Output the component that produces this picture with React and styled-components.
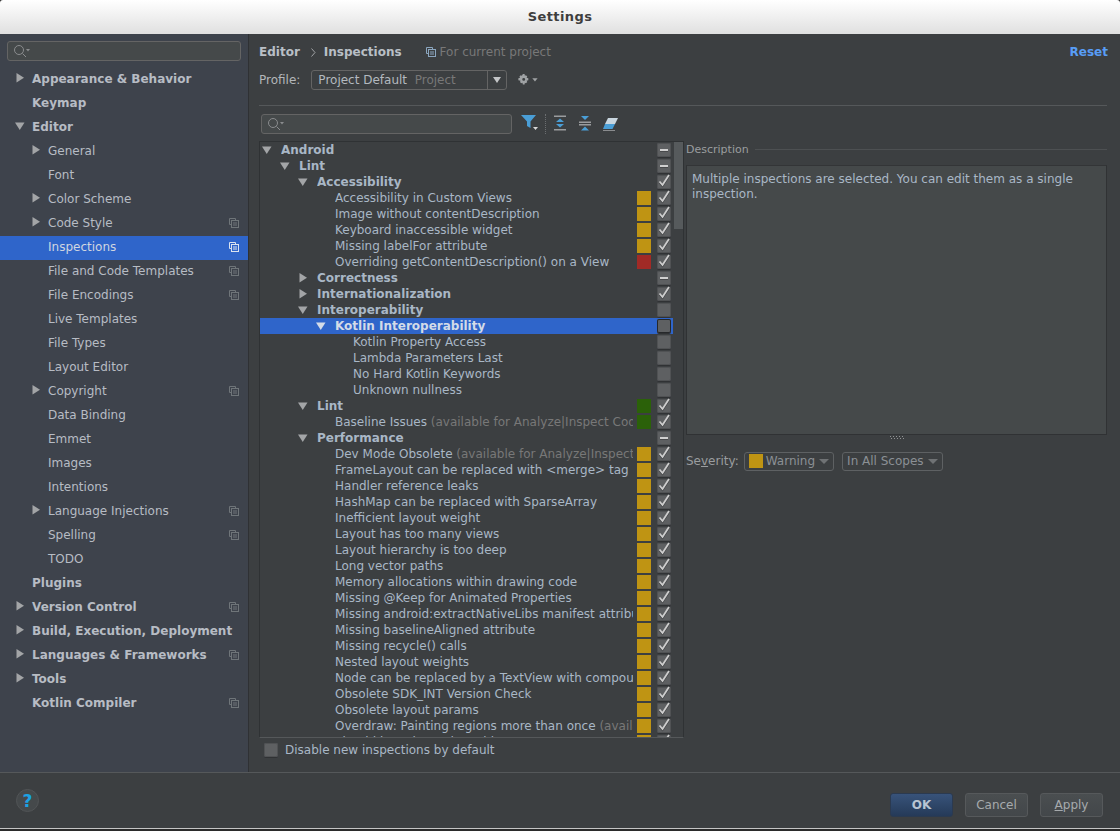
import React from 'react';
import styled, { createGlobalStyle } from 'styled-components';

const Global = createGlobalStyle`
  html, body { margin: 0; padding: 0; background: #2b2b2b; }
  body { font-family: "DejaVu Sans", sans-serif; font-size: 12px; color: #bbbbbb; }
  * { box-sizing: border-box; }
`;

const Window = styled.div`
  width: 1120px; height: 831px; display: flex; flex-direction: column; overflow: hidden;
  background: #2b2b2b; border-bottom: 2px solid #2b2b2b;
`;
const TitleBar = styled.div`
  height: 34px; flex: none; display: flex; align-items: center; justify-content: center; padding-bottom: 2px;
  background: linear-gradient(#ffffff, #e0e0e0); border-radius: 3px 3px 0 0;
  font-weight: 700; font-size: 13px; color: #3e3e3e; letter-spacing: .4px;
`;
const Main = styled.div`flex: 1; display: flex; min-height: 0; background: #3c3f41;`;
const Sidebar = styled.aside`
  width: 249px; flex: none; background: #3e434c; border-right: 1px solid #2f3134;
  padding-top: 7px; display: flex; flex-direction: column;
`;
const SearchBox = styled.div`
  height: 20px; display: flex; align-items: center; padding-left: 5px;
  background: #45494a; border: 1px solid #646464; border-radius: 3px;
`;
const SideSearch = styled(SearchBox)`margin: 0 7px 7px 7px; width: 234px; flex: none;`;
const SideRow = styled.div`
  height: 24px; flex: none; display: flex; align-items: center; position: relative;
  padding-left: ${p => p.$level ? 48 : 32}px; padding-bottom: 2px;
  font-size: 12px; font-weight: ${p => p.$level ? 400 : 700};
  color: ${p => p.$selected ? '#cfd6e0' : '#b7bcc4'};
  background: ${p => p.$selected ? '#2f65ca' : 'transparent'};
`;
const ArrowSlot = styled.span`
  position: absolute; top: 5px; left: ${p => p.$left}px; width: 10px; height: 10px; display: flex;
`;
const CopyMark = styled.span`position: absolute; right: 9px; top: 6px; display: flex;`;

const Content = styled.main`flex: 1; display: flex; flex-direction: column; padding: 0 13px 0 10px; min-width: 0;`;
const Breadcrumb = styled.div`height: 36px; flex: none; display: flex; align-items: center; font-size: 12px;`;
const Crumb = styled.span`font-weight: 700; color: #b9bfc6;`;
const Sep = styled.span`margin: 0 8px 0 11px; display: flex;`;
const ProjectNote = styled.span`display: flex; align-items: center; gap: 4px; margin-left: 24px; color: #787878; font-size: 12px;`;
const Reset = styled.a`margin-left: auto; margin-right: -1px; color: #589df6; font-weight: 700; font-size: 12px;`;
const ProfileRow = styled.div`
  height: 20px; flex: none; display: flex; align-items: center; font-size: 12px; color: #b3b6b9;
`;
const ProfileCombo = styled.div`
  width: 196px; height: 20px; margin-left: 11px; display: flex; align-items: center;
  border: 1px solid #646464; border-radius: 3px; background: #3c3f41;
`;
const ProfileValue = styled.span`flex: 1; padding-left: 6px; color: #b3b9bf; white-space: pre;`;
const Muted = styled.span`color: #787878;`;
const ComboBtn = styled.span`
  width: 19px; height: 100%; border-left: 1px solid #646464; display: flex; align-items: center; justify-content: center;
`;
const Gear = styled.span`margin-left: 10px; display: flex; align-items: center;`;
const Divider = styled.div`height: 1px; flex: none; background: #55585a; margin-top: 15px;`;
const ToolRow = styled.div`height: 35px; flex: none; display: flex; align-items: center; padding-left: 2px;`;
const ToolSearch = styled(SearchBox)`width: 251px;`;
const Tool = styled.span`display: flex; margin-left: ${p => p.$gap || 0}px;`;
const ToolDots = styled.span`height: 20px; margin: 0 0 0 6px; border-left: 1px dotted #6b6e70;`;

const Split = styled.div`flex: 1; display: flex; min-height: 0;`;
const LeftCol = styled.div`width: 425px; flex: none; display: flex; flex-direction: column;`;
const TreePanel = styled.div`
  height: 597px; flex: none; position: relative; overflow: hidden;
  border: 1px solid #2f3234; border-bottom-color: #55585a;
`;
const Row = styled.div`
  height: 16px; width: 413px; display: flex; align-items: center; position: relative;
  padding-left: ${p => 21 + p.$level * 18}px;
  background: ${p => p.$selected ? '#2f65ca' : 'transparent'};
  color: ${p => p.$selected ? '#d3dbe8' : '#a9b7c6'};
  font-size: 12px; font-weight: ${p => p.$bold ? 700 : 400};
`;
const RowLabel = styled.span`flex: 1; min-width: 0; overflow: hidden; white-space: pre;`;
const Note = styled.span`color: #787878; font-weight: 400;`;
const TreeArrow = styled.span`position: absolute; top: 3px; left: ${p => 2 + p.$level * 18}px; display: flex;`;
const Swatch = styled.span`
  width: 14px; height: 14px; flex: none; margin-left: 4px; background: ${p => p.$color || 'transparent'};
`;
const Check = styled.span`
  width: 14px; height: 14px; flex: none; margin-left: 6px; margin-right: 2px; position: relative; border-radius: 2px;
  background: #5e6062;
  box-shadow: inset 0 0 0 1px ${p => p.$selected ? '#26282a' : '#505254'}, 0 1px 0 #303234;
  display: flex; align-items: center; justify-content: center;
`;
const Dash = styled.span`width: 8px; height: 2px; background: #d0d0d0; box-shadow: 0 1px 0 #48494b;`;
const Thumb = styled.div`position: absolute; top: 0; right: 0; width: 9px; height: 87px; background: #565a5c;`;
const DisableRow = styled.label`display: flex; align-items: center; gap: 7px; height: 24px; padding-left: 5px; font-size: 12px; color: #a9b7c6;`;
const BoxOnly = styled(Check)`margin: 0;`;

const RightCol = styled.div`flex: 1; min-width: 0; padding-left: 2px; display: flex; flex-direction: column;`;
const DescTitle = styled.div`height: 16px; margin-bottom: 8px; flex: none; display: flex; align-items: center; gap: 6px; color: #9a9d9f; font-size: 11px;`;
const Rule = styled.span`flex: 1; height: 1px; background: #4d5052;`;
const DescBox = styled.div`
  height: 270px; flex: none; background: #45494a; border: 1px solid #303234; border-top-color: #333537;
  padding: 6px 5px; font-size: 12px; line-height: 15px; color: #a9b7c6;
`;
const Grip = styled.div`height: 8px; flex: none; display: flex; justify-content: center; padding-top: 1px;`;
const SeverityRow = styled.div`display: flex; align-items: center; height: 20px; margin-top: 8px; font-size: 12px; color: #9a9d9f;`;
const U = styled.span`text-decoration: underline;`;
const Pill = styled.div`
  height: 19px; margin-left: ${p => p.$gap}px; padding: 0 4px; display: flex; align-items: center; gap: 4px;
  border: 1px solid #5e6163; border-radius: 3px; color: #8b9095; font-size: 12px;
`;
const PillSwatch = styled.span`width: 14px; height: 14px; background: #bf9413; margin-right: -1px;`;

const Footer = styled.footer`
  height: 57px; flex: none; background: #3c3f41; border-top: 1px solid #55585a; border-bottom: 1px solid #c4c4c4;
  display: flex; align-items: flex-start; padding: 20px 17px 0 16px;
`;
const Help = styled.span`
  width: 23px; height: 23px; margin-top: -4px; border-radius: 50%; background: #45494b; border: 1px solid #515456; display: flex; align-items: center; justify-content: center;
  color: #1ba3e4; font-weight: 700; font-size: 17px;
`;
const Buttons = styled.div`margin-left: auto; display: flex; gap: 12px;`;
const Btn = styled.button`
  width: 63px; height: 24px; padding: 0; border-radius: 3px; font: inherit; font-size: 12px;
  font-weight: ${p => p.$primary ? 700 : 400};
  color: ${p => p.$primary ? '#b8c4d2' : '#a6aaad'};
  background: ${p => p.$primary ? 'linear-gradient(#38537a, #253a58)' : 'linear-gradient(#4a4e50, #43474a)'};
  border: 1px solid ${p => p.$primary ? '#2b3a50' : '#56595b'};
`;

const Tri = ({ open, color = '#a3a5a7' }) => open
  ? <svg width="10" height="10" viewBox="0 0 10 10"><path d="M0 1.5h9.5L4.75 9z" fill={color} /></svg>
  : <svg width="10" height="10" viewBox="0 0 10 10"><path d="M1.5 0v9.5L9 4.75z" fill={color} /></svg>;

const Mag = () => (
  <svg width="20" height="14" viewBox="0 0 20 14" fill="none">
    <circle cx="6" cy="6" r="4.5" stroke="#8a8c8e" />
    <path d="M9.5 9.5L13 13" stroke="#8a8c8e" />
    <path d="M13 5h4l-2 2.5z" fill="#8a8c8e" />
  </svg>
);
const Copy = ({ color = '#6f7579' }) => (
  <svg width="10" height="10" viewBox="0 0 10 10" fill="none" stroke={color}>
    <path d="M6.5 2.5V.5H.5v6h2" />
    <rect x="2.5" y="2.5" width="7" height="7" />
    <path d="M4 5h4M4 7h4" />
  </svg>
);
const Tick = () => (
  <svg width="14" height="16" viewBox="0 0 14 16" style={{ marginTop: -4, overflow: 'visible' }} fill="none">
    <path d="M2.5 9.5L5.5 13L12 3" stroke="#3a3c3e" strokeWidth="1.8" transform="translate(0 1)" />
    <path d="M2.5 9.5L5.5 13L12 3" stroke="#cdcdcd" strokeWidth="1.8" />
  </svg>
);

const side = [
  ['Appearance & Behavior', 0, 'c'], ['Keymap', 0], ['Editor', 0, 'o'],
  ['General', 1, 'c'], ['Font', 1], ['Color Scheme', 1, 'c'], ['Code Style', 1, 'c', true],
  ['Inspections', 1, null, true, true], ['File and Code Templates', 1, null, true], ['File Encodings', 1, null, true],
  ['Live Templates', 1], ['File Types', 1], ['Layout Editor', 1], ['Copyright', 1, 'c', true], ['Data Binding', 1],
  ['Emmet', 1], ['Images', 1], ['Intentions', 1], ['Language Injections', 1, 'c', true], ['Spelling', 1, null, true], ['TODO', 1],
  ['Plugins', 0], ['Version Control', 0, 'c', true], ['Build, Execution, Deployment', 0, 'c'],
  ['Languages & Frameworks', 0, 'c', true], ['Tools', 0, 'c'], ['Kotlin Compiler', 0, null, true],
];

const Y = '#bf9413', R = '#a12a26', G = '#2b6109';
const leaf = (name, color, note) => ({ name, color, note, level: 3, state: 'on' });
const tree = [
  { name: 'Android', level: 0, bold: 1, arrow: 'o', state: 'dash' },
  { name: 'Lint', level: 1, bold: 1, arrow: 'o', state: 'dash' },
  { name: 'Accessibility', level: 2, bold: 1, arrow: 'o', state: 'on' },
  leaf('Accessibility in Custom Views', Y), leaf('Image without contentDescription', Y),
  leaf('Keyboard inaccessible widget', Y), leaf('Missing labelFor attribute', Y),
  leaf('Overriding getContentDescription() on a View', R),
  { name: 'Correctness', level: 2, bold: 1, arrow: 'c', state: 'dash' },
  { name: 'Internationalization', level: 2, bold: 1, arrow: 'c', state: 'on' },
  { name: 'Interoperability', level: 2, bold: 1, arrow: 'o', state: 'off' },
  { name: 'Kotlin Interoperability', level: 3, bold: 1, arrow: 'o', state: 'off', selected: 1 },
  { name: 'Kotlin Property Access', level: 4, state: 'off' },
  { name: 'Lambda Parameters Last', level: 4, state: 'off' },
  { name: 'No Hard Kotlin Keywords', level: 4, state: 'off' },
  { name: 'Unknown nullness', level: 4, state: 'off' },
  { name: 'Lint', level: 2, bold: 1, arrow: 'o', state: 'on', color: G },
  leaf('Baseline Issues', G, ' (available for Analyze|Inspect Code)'),
  { name: 'Performance', level: 2, bold: 1, arrow: 'o', state: 'dash' },
  leaf('Dev Mode Obsolete', Y, ' (available for Analyze|Inspect Code)'),
  leaf('FrameLayout can be replaced with <merge> tag', Y), leaf('Handler reference leaks', Y),
  leaf('HashMap can be replaced with SparseArray', Y), leaf('Inefficient layout weight', Y),
  leaf('Layout has too many views', Y), leaf('Layout hierarchy is too deep', Y),
  leaf('Long vector paths', Y), leaf('Memory allocations within drawing code', Y),
  leaf('Missing @Keep for Animated Properties', Y), leaf('Missing android:extractNativeLibs manifest attribute', Y),
  leaf('Missing baselineAligned attribute', Y), leaf('Missing recycle() calls', Y),
  leaf('Nested layout weights', Y), leaf('Node can be replaced by a TextView with compound drawable', Y),
  leaf('Obsolete SDK_INT Version Check', Y), leaf('Obsolete layout params', Y),
  leaf('Overdraw: Painting regions more than once', Y, ' (available for Analyze|Inspect Code)'),
  leaf('Should be using a drawable', Y),
];

export default function App() {
  return (
    <Window>
      <Global />
      <TitleBar>Settings</TitleBar>
      <Main>
        <Sidebar>
          <SideSearch><Mag /></SideSearch>
          {side.map(([name, level, arrow, copy, selected]) => (
            <SideRow key={name} $level={level} $selected={selected}>
              {arrow && <ArrowSlot $left={level ? 31 : 15}><Tri open={arrow === 'o'} /></ArrowSlot>}
              {name}
              {copy && <CopyMark><Copy color={selected ? '#dbe3ef' : '#6f7579'} /></CopyMark>}
            </SideRow>
          ))}
        </Sidebar>
        <Content>
          <Breadcrumb>
            <Crumb>Editor</Crumb>
            <Sep>
              <svg width="5" height="9" viewBox="0 0 5 9" fill="none"><path d="M.5.5l3.5 4-3.5 4" stroke="#a0a3a5" /></svg>
            </Sep>
            <Crumb>Inspections</Crumb>
            <ProjectNote><Copy color="#8ba6bf" />For current project</ProjectNote>
            <Reset>Reset</Reset>
          </Breadcrumb>
          <ProfileRow>
            Profile:
            <ProfileCombo>
              <ProfileValue>Project Default  <Muted>Project</Muted></ProfileValue>
              <ComboBtn><svg width="8" height="6" viewBox="0 0 8 6"><path d="M0 0h8L4 6z" fill="#c4c6c8" /></svg></ComboBtn>
            </ProfileCombo>
            <Gear>
              <svg width="22" height="15" viewBox="0 0 20 14" fill="#a0a3a5">
                <path d="M5.2 1h1.6l.3 1.6 1-.4 1.2 1.1-.6 1.2 1.6.5v1.8l-1.6.4.6 1.2-1.2 1.2-1-.6-.3 1.7H5.2l-.4-1.7-1.1.6-1.2-1.2.6-1.2L1 6.8V5l1.6-.5L2 3.3l1.2-1.1 1.1.4zM6 4.6a1.3 1.3 0 100 2.7 1.3 1.3 0 000-2.7z" />
                <path d="M14 5h5l-2.5 3z" />
              </svg>
            </Gear>
          </ProfileRow>
          <Divider />
          <ToolRow>
            <ToolSearch><Mag /></ToolSearch>
            <Tool $gap={9}>
              <svg width="18" height="18" viewBox="0 0 18 18" style={{ marginTop: -3 }}>
                <path d="M0 2h15L9.5 8.5V15L6 13V8.5z" fill="#4a9ed6" />
                <path d="M12 14h5l-2.5 3z" fill="#d8d8d8" />
              </svg>
            </Tool>
            <ToolDots />
            <Tool $gap={7}>
              <svg width="14" height="16" viewBox="0 0 14 16" style={{ marginTop: -1 }}>
                <path d="M1 .5h12v1.5H1zM1 14h12v1.5H1z" fill="#9a9c9e" />
                <path d="M7 3.5l4 3.5H3zM7 12.5L3 9h8z" fill="#4a9ed6" />
              </svg>
            </Tool>
            <Tool $gap={11}>
              <svg width="14" height="16" viewBox="0 0 14 16" style={{ marginTop: -1 }}>
                <path d="M1 6.5h12V8H1zM1 9h12v1.5H1z" fill="#9a9c9e" />
                <path d="M3 1h8L7 5zM7 11.5l4 4H3z" fill="#4a9ed6" />
              </svg>
            </Tool>
            <Tool $gap={11}>
              <svg width="16" height="14" viewBox="0 0 16 14">
                <path d="M5 1h10l-3 6H2z" fill="#c9d6df" />
                <path d="M2 7h10l-2.5 5H0z" fill="#4a9ed6" />
                <path d="M0 13h12v1H0z" fill="#8a8c8e" />
              </svg>
            </Tool>
          </ToolRow>
          <Split>
            <LeftCol>
              <TreePanel>
                {tree.map((r, i) => (
                  <Row key={i} $level={r.level} $bold={r.bold} $selected={r.selected}>
                    {r.arrow && <TreeArrow $level={r.level}><Tri open={r.arrow === 'o'} color={r.selected ? '#d3dbe8' : '#a3a5a7'} /></TreeArrow>}
                    <RowLabel>{r.name}{r.note && <Note>{r.note}</Note>}</RowLabel>
                    <Swatch $color={r.color} />
                    <Check $selected={r.selected}>
                      {r.state === 'on' && <Tick />}
                      {r.state === 'dash' && <Dash />}
                    </Check>
                  </Row>
                ))}
                <Thumb />
              </TreePanel>
              <DisableRow><BoxOnly />Disable new inspections by default</DisableRow>
            </LeftCol>
            <RightCol>
              <DescTitle>Description<Rule /></DescTitle>
              <DescBox>Multiple inspections are selected. You can edit them as a single inspection.</DescBox>
              <Grip>
                <svg width="14" height="4" viewBox="0 0 14 4" fill="#909294">
                  {[0, 3, 6, 9, 12].map(x => <rect key={x} x={x} y="0" width="1" height="1" />)}
                  {[1, 4, 7, 10, 13].map(x => <rect key={x} x={x} y="2" width="1" height="1" />)}
                </svg>
              </Grip>
              <SeverityRow>
                <span>Se<U>v</U>erity:</span>
                <Pill $gap={5}><PillSwatch />Warning<svg width="10" height="5" viewBox="0 0 10 5"><path d="M0 0h10L5 5z" fill="#6f7274" /></svg></Pill>
                <Pill $gap={8}>In All Scopes<svg width="10" height="5" viewBox="0 0 10 5"><path d="M0 0h10L5 5z" fill="#6f7274" /></svg></Pill>
              </SeverityRow>
            </RightCol>
          </Split>
        </Content>
      </Main>
      <Footer>
        <Help>?</Help>
        <Buttons>
          <Btn $primary>OK</Btn>
          <Btn>Cancel</Btn>
          <Btn><U>A</U>pply</Btn>
        </Buttons>
      </Footer>
    </Window>
  );
}
